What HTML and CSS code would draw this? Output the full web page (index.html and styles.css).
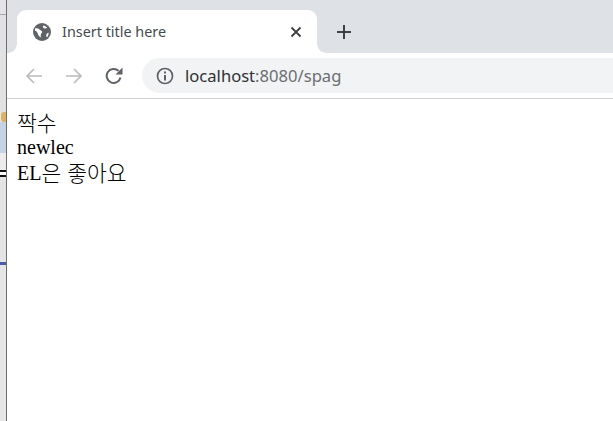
FILE: index.html
```html
<!DOCTYPE html>
<html lang="ko">
<head>
<meta charset="utf-8">
<title>Insert title here</title>
<link rel="stylesheet" href="styles.css">
</head>
<body>
<div class="desktop">
  <aside class="behind">
    <div class="b-top"></div>
    <div class="b-line"></div>
    <div class="b-mid"></div>
    <div class="b-ico"></div>
    <div class="b-blue"></div>
    <div class="b-gap"></div>
    <div class="b-black"></div>
    <div class="b-gap2"></div>
    <div class="b-black"></div>
    <div class="b-gap3"></div>
    <div class="b-rule"></div>
    <div class="b-rest"></div>
  </aside>
  <div class="browser">
    <div class="tabstrip">
      <div class="tab">
        <svg class="favicon" viewBox="0 0 18 18" width="18" height="18"><circle cx="9" cy="9" r="9" fill="#5f6368"/><path d="M2 5.500c2-.6 3.500-.2 4.500 1 .8 1 2.300 1 2.600 2.300.2 1.200-1 1.500-1.300 2.600-.2 1-.1 2.200.5 3.100-2.200-.8-3.200-2.500-3.700-4.200-.4-1.400-1.500-2.400-2.600-2.800zM10 2.500c1.800.2 3.300 1 4.300 2.300-1 .3-1.600 1-2.600.7-.9-.3-2-.7-1.700-3zM15.500 9.500c.4 1.800-.3 3.600-1.500 4.800-.7-.6-1-1.600-.7-2.500.4-1.100 1.100-1.800 2.200-2.300z" fill="#fff"/></svg>
        <span class="tab-title">Insert title here</span>
        <svg class="tab-close" viewBox="0 0 12 12" width="12" height="12"><path d="M1.500 1.500l9 9M10.500 1.500l-9 9" stroke="#3c4043" stroke-width="1.800" fill="none"/></svg>
      </div>
      <svg class="newtab" viewBox="0 0 16 16" width="16" height="16"><path d="M8 1v14M1 8h14" stroke="#3c4043" stroke-width="2" fill="none"/></svg>
    </div>
    <div class="toolbar">
      <svg class="nav nav-back" viewBox="0 0 18 18" width="18" height="18"><path d="M17 9H2M9 2L2 9l7 7" stroke="#babcbe" stroke-width="1.700" fill="none"/></svg>
      <svg class="nav nav-fwd" viewBox="0 0 18 18" width="18" height="18"><path d="M1 9h15M9 2l7 7-7 7" stroke="#babcbe" stroke-width="1.700" fill="none"/></svg>
      <svg class="nav nav-reload" viewBox="0 0 18 18" width="18" height="18"><path d="M15.500 10.500A7 7 0 1 1 13.500 3.800" stroke="#5f6368" stroke-width="2" fill="none"/><path d="M10.500 7.500H17.500V.5z" fill="#5f6368"/></svg>
      <div class="omnibox">
        <svg class="info" viewBox="0 0 18 18" width="18" height="18"><circle cx="9" cy="9" r="7.500" stroke="#5f6368" stroke-width="1.700" fill="none"/><path d="M8 8h2v5.500H8zM8 4.500h2v2H8z" fill="#5f6368"/></svg>
        <span class="url"><span class="host">localhost</span>:8080/spag</span>
      </div>
    </div>
    <main class="page">
      <div class="line"><span class="ko">짝수</span></div>
      <div class="line">newlec</div>
      <div class="line">EL<span class="ko">은 좋아요</span></div>
    </main>
  </div>
</div>
</body>
</html>
```

FILE: styles.css
```css
html, body {
  margin: 0;
  padding: 0;
  height: 100%;
  overflow: hidden;
}
.desktop {
  display: flex;
  width: 613px;
  height: 421px;
  background: #fff;
}
.behind {
  flex: 0 0 6px;
  display: flex;
  flex-direction: column;
  background: #e6e6e6;
  border-right: 1px solid #6e6e6e;
}
.b-top { height: 14px; background: #e4e4e4; }
.b-line { height: 1px; background: #a8a8a8; }
.b-mid { height: 97px; background: #e2e2e2; }
.b-ico { height: 10px; margin-left: 1px; border-radius: 3px 0 0 3px; background: #d9b468; }
.b-blue { height: 31px; background: #c6d3e2; }
.b-gap { height: 17px; background: #ececec; }
.b-black { height: 2px; background: #111; }
.b-gap2 { height: 3px; background: #fff; }
.b-gap3 { height: 85px; background: #e4e4e4; }
.b-rule { height: 3px; background: #4a5ea8; }
.b-rest { flex: 1; background: #e6e6e6; }
.browser {
  flex: 1;
  min-width: 0;
  display: flex;
  flex-direction: column;
}
.tabstrip {
  height: 43px;
  padding: 10px 0 0 10px;
  display: flex;
  align-items: stretch;
  background: #dee1e6;
}
.tab {
  position: relative;
  width: 300px;
  box-sizing: border-box;
  padding: 0 15px 0 16px;
  display: flex;
  align-items: center;
  background: #fff;
  border-radius: 9px 9px 0 0;
}
.tab::before,
.tab::after {
  content: "";
  position: absolute;
  bottom: 0;
  width: 9px;
  height: 9px;
}
.tab::before {
  left: -9px;
  background: radial-gradient(circle at 0 0, #dee1e6 8.500px, #fff 9px);
}
.tab::after {
  right: -9px;
  background: radial-gradient(circle at 100% 0, #dee1e6 8.500px, #fff 9px);
}
.favicon { flex: none; }
.tab-title {
  flex: 1;
  margin-left: 11px;
  font: 14.400px "Noto Sans", "Open Sans", sans-serif;
  color: #45494d;
  white-space: nowrap;
}
.tab-close { flex: none; }
.newtab { align-self: center; margin-left: 19px; }
.toolbar {
  height: 46px;
  box-sizing: border-box;
  display: flex;
  align-items: center;
  padding-left: 18px;
  background: #fff;
  border-bottom: 1px solid #d0d1d3;
}
.nav { flex: none; }
.nav-fwd { margin-left: 22px; }
.nav-reload { margin-left: 22px; }
.omnibox {
  flex: 1;
  height: 35px;
  margin-left: 19px;
  padding-left: 14px;
  display: flex;
  align-items: center;
  background: #f1f3f4;
  border-radius: 17.500px 0 0 17.500px;
}
.info { flex: none; }
.url {
  margin-left: 11px;
  font: 16.600px "Noto Sans", "Open Sans", sans-serif;
  color: #6b6e72;
  white-space: nowrap;
}
.host { color: #303134; }
.page {
  flex: 1;
  padding: 10px 0 0 10px;
  font: 20px/25px "Liberation Serif", "Noto Sans CJK KR", serif;
  color: #000;
}
.line { height: 25px; }
.ko {
  font: 300 21.500px/25px "Noto Sans CJK KR", sans-serif;
  vertical-align: -1px;
}
.line:nth-child(2) { padding-top: 1px; height: 24px; }
```
